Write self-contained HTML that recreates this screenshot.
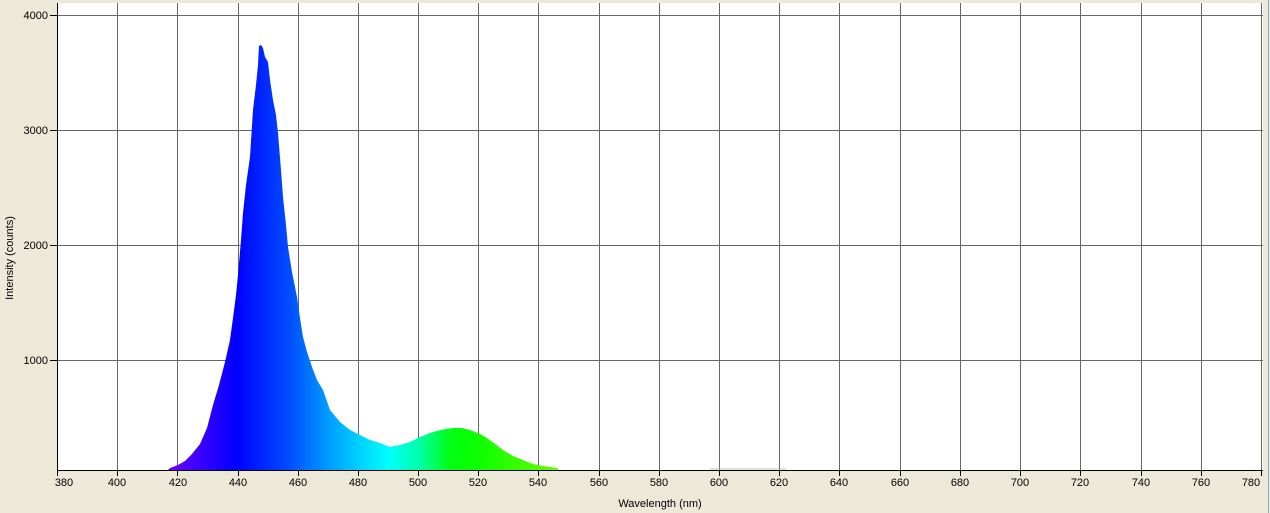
<!DOCTYPE html>
<html><head><meta charset="utf-8"><style>
html,body{margin:0;padding:0;background:#ECE9D8;}
svg{display:block;font-family:"Liberation Sans",sans-serif;}
</style></head><body>
<svg width="1270" height="513" viewBox="0 0 1270 513" xmlns="http://www.w3.org/2000/svg">
<defs>
<linearGradient id="sp" gradientUnits="userSpaceOnUse" x1="170" y1="0" x2="560" y2="0">
<stop offset="0" stop-color="#6a00ff"/>
<stop offset="0.17" stop-color="#0000ff"/>
<stop offset="0.31" stop-color="#0050ff"/>
<stop offset="0.41" stop-color="#00a0ff"/>
<stop offset="0.56" stop-color="#00ffff"/>
<stop offset="0.64" stop-color="#00ffa8"/>
<stop offset="0.72" stop-color="#00ff10"/>
<stop offset="0.8" stop-color="#10ff00"/>
<stop offset="1" stop-color="#66ff00"/>
</linearGradient>
</defs>
<rect x="0" y="0" width="1270" height="513" fill="#ECE9D8"/>
<rect x="57" y="3" width="1206" height="467" fill="#fff"/>
<g stroke="#666" stroke-width="1">
<line x1="57" y1="15.5" x2="1263" y2="15.5"/>
<line x1="57" y1="130.5" x2="1263" y2="130.5"/>
<line x1="57" y1="245.5" x2="1263" y2="245.5"/>
<line x1="57" y1="360.5" x2="1263" y2="360.5"/>
<line x1="117.5" y1="3" x2="117.5" y2="470"/><line x1="177.5" y1="3" x2="177.5" y2="470"/><line x1="238.5" y1="3" x2="238.5" y2="470"/><line x1="298.5" y1="3" x2="298.5" y2="470"/><line x1="358.5" y1="3" x2="358.5" y2="470"/><line x1="418.5" y1="3" x2="418.5" y2="470"/><line x1="478.5" y1="3" x2="478.5" y2="470"/><line x1="538.5" y1="3" x2="538.5" y2="470"/><line x1="599.5" y1="3" x2="599.5" y2="470"/><line x1="659.5" y1="3" x2="659.5" y2="470"/><line x1="719.5" y1="3" x2="719.5" y2="470"/><line x1="779.5" y1="3" x2="779.5" y2="470"/><line x1="839.5" y1="3" x2="839.5" y2="470"/><line x1="900.5" y1="3" x2="900.5" y2="470"/><line x1="960.5" y1="3" x2="960.5" y2="470"/><line x1="1020.5" y1="3" x2="1020.5" y2="470"/><line x1="1080.5" y1="3" x2="1080.5" y2="470"/><line x1="1141.5" y1="3" x2="1141.5" y2="470"/><line x1="1201.5" y1="3" x2="1201.5" y2="470"/><line x1="1261.5" y1="3" x2="1261.5" y2="470"/>
</g>
<polygon fill="url(#sp)" points="168,470 170,468 178,465 185,461 192,454 200,444 207,428 213,405 219,385 225,362 230,340 233,318 236,295 238,275 241,240 243,213 246,185 250,157 253,110 256,85 258,65 259,46 261,45 263,48 265,57 268,62 270,80 273,100 276,115 278,133 281,170 283,197 286,225 288,247 292,272 297,297 300,318 303,337 307,352 312,367 317,380 323,390 330,410 340,422 350,430 360,435 370,440 380,443 390,447 400,445 410,442 420,437 430,433 440,430 453,428 462,428 470,430 480,434 487,438 495,444 503,450 513,456 523,460 533,464 543,466 558,468 558,470"/>
<rect x="710" y="468" width="76" height="2" fill="#b0b090" opacity="0.35"/>
<g stroke="#000" stroke-width="1">
<line x1="57.5" y1="3" x2="57.5" y2="471"/>
<line x1="57" y1="470.5" x2="1263" y2="470.5"/>
<line x1="50" y1="15.5" x2="57" y2="15.5"/><line x1="50" y1="130.5" x2="57" y2="130.5"/><line x1="50" y1="245.5" x2="57" y2="245.5"/><line x1="50" y1="360.5" x2="57" y2="360.5"/>
<line x1="57.5" y1="470" x2="57.5" y2="476"/><line x1="117.5" y1="470" x2="117.5" y2="476"/><line x1="177.5" y1="470" x2="177.5" y2="476"/><line x1="238.5" y1="470" x2="238.5" y2="476"/><line x1="298.5" y1="470" x2="298.5" y2="476"/><line x1="358.5" y1="470" x2="358.5" y2="476"/><line x1="418.5" y1="470" x2="418.5" y2="476"/><line x1="478.5" y1="470" x2="478.5" y2="476"/><line x1="538.5" y1="470" x2="538.5" y2="476"/><line x1="599.5" y1="470" x2="599.5" y2="476"/><line x1="659.5" y1="470" x2="659.5" y2="476"/><line x1="719.5" y1="470" x2="719.5" y2="476"/><line x1="779.5" y1="470" x2="779.5" y2="476"/><line x1="839.5" y1="470" x2="839.5" y2="476"/><line x1="900.5" y1="470" x2="900.5" y2="476"/><line x1="960.5" y1="470" x2="960.5" y2="476"/><line x1="1020.5" y1="470" x2="1020.5" y2="476"/><line x1="1080.5" y1="470" x2="1080.5" y2="476"/><line x1="1141.5" y1="470" x2="1141.5" y2="476"/><line x1="1201.5" y1="470" x2="1201.5" y2="476"/><line x1="1261.5" y1="470" x2="1261.5" y2="476"/>
</g>
<line x1="1268.5" y1="0" x2="1268.5" y2="513" stroke="#8aa8d8" stroke-width="1"/>
<g font-size="11" fill="#000" text-anchor="end">
<text x="48" y="19">4000</text><text x="48" y="134">3000</text><text x="48" y="249">2000</text><text x="48" y="364">1000</text>
</g>
<g font-size="11" fill="#000" text-anchor="middle">
<text x="64" y="486">380</text><text x="117" y="486">400</text><text x="178" y="486">420</text><text x="238" y="486">440</text><text x="298" y="486">460</text><text x="358" y="486">480</text><text x="418" y="486">500</text><text x="478" y="486">520</text><text x="538" y="486">540</text><text x="599" y="486">560</text><text x="659" y="486">580</text><text x="719" y="486">600</text><text x="779" y="486">620</text><text x="839" y="486">640</text><text x="900" y="486">660</text><text x="960" y="486">680</text><text x="1020" y="486">700</text><text x="1080" y="486">720</text><text x="1141" y="486">740</text><text x="1201" y="486">760</text><text x="1251" y="486">780</text>
<text x="660" y="507">Wavelength (nm)</text>
<text x="0" y="0" transform="translate(13,258) rotate(-90)">Intensity (counts)</text>
</g>
</svg>
</body></html>
